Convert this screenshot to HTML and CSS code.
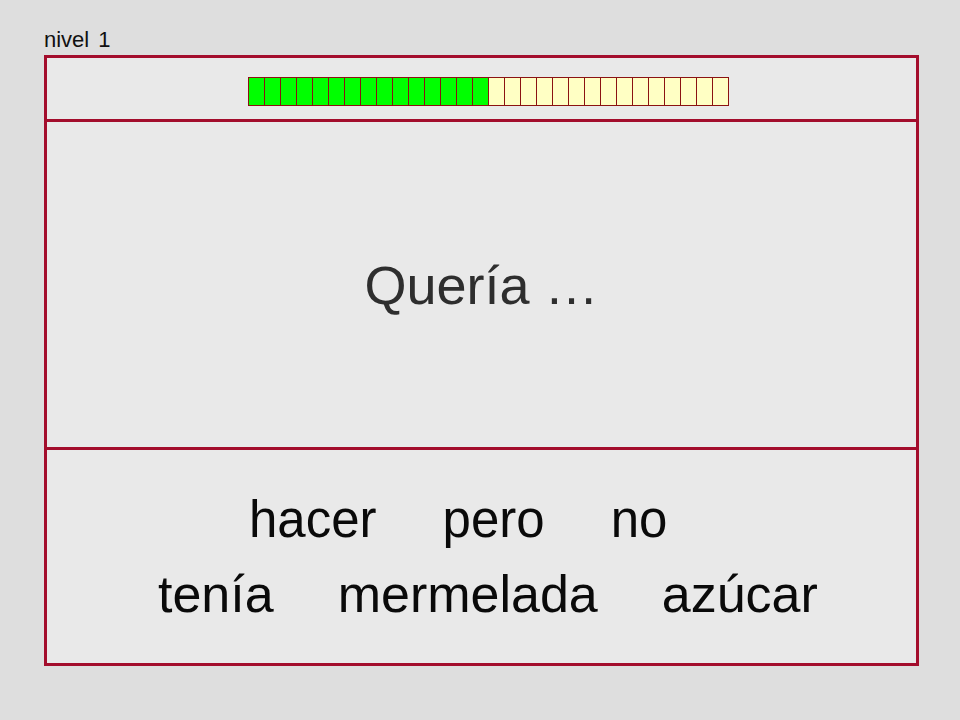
FILE: index.html
```html
<!DOCTYPE html>
<html lang="es">
<head>
    <meta charset="UTF-8">
    <title>Ordena las palabras</title>
    <link rel="stylesheet" href="styles.css">
</head>
<body>
    <div class="level">nivel 1</div>
    <div class="board">
        <div class="progress-row">
            <div class="progress">
                <span class="cell done"></span><span class="cell done"></span><span class="cell done"></span>
                <span class="cell done"></span><span class="cell done"></span><span class="cell done"></span>
                <span class="cell done"></span><span class="cell done"></span><span class="cell done"></span>
                <span class="cell done"></span><span class="cell done"></span><span class="cell done"></span>
                <span class="cell done"></span><span class="cell done"></span><span class="cell done"></span>
                <span class="cell"></span><span class="cell"></span><span class="cell"></span>
                <span class="cell"></span><span class="cell"></span><span class="cell"></span>
                <span class="cell"></span><span class="cell"></span><span class="cell"></span>
                <span class="cell"></span><span class="cell"></span><span class="cell"></span>
                <span class="cell"></span><span class="cell"></span><span class="cell"></span>
            </div>
        </div>
        <div class="sentence">Quería …</div>
        <div class="words">
            <div class="word-row first">
                <span class="word">hacer</span>
                <span class="word">pero</span>
                <span class="word">no</span>
            </div>
            <div class="word-row second">
                <span class="word">tenía</span>
                <span class="word">mermelada</span>
                <span class="word">azúcar</span>
            </div>
        </div>
    </div>
</body>
</html>
```

FILE: styles.css
```css
body {
    margin: 0;
    padding: 28px 0 0 44px;
    background-color: #dedede;
    font-family: "Liberation Sans", Arial, sans-serif;
}
.level {
    font-size: 22px;
    line-height: 23px;
    word-spacing: 3px;
    color: #111;
    margin-bottom: 4px;
}
.board {
    width: 869px;
    height: 605px;
    border: 3px solid #a30d2c;
    background-color: #e9e9e9;
    display: flex;
    flex-direction: column;
}
.progress-row {
    height: 64px;
    border-bottom: 3px solid #a30d2c;
    padding: 19px 0 0 201px;
    box-sizing: border-box;
}
.progress {
    display: flex;
    border-left: 1px solid #8b1212;
}
.cell {
    width: 15px;
    height: 27px;
    border: 1px solid #8b1212;
    border-left: none;
    background-color: #ffffc4;
}
.cell.done {
    background-color: #00ff00;
}
.sentence {
    height: 325px;
    border-bottom: 3px solid #a30d2c;
    display: flex;
    align-items: center;
    justify-content: center;
    font-size: 54px;
    color: #2e2e2e;
}
.words {
    padding-top: 32px;
}
.word-row {
    display: flex;
    gap: 64px;
    font-size: 52px;
    line-height: 75px;
    color: #0a0a0a;
}
.word-row.first {
    padding-left: 202px;
    gap: 66px;
    font-size: 51px;
}
.word-row.second {
    padding-left: 111px;
}
```
